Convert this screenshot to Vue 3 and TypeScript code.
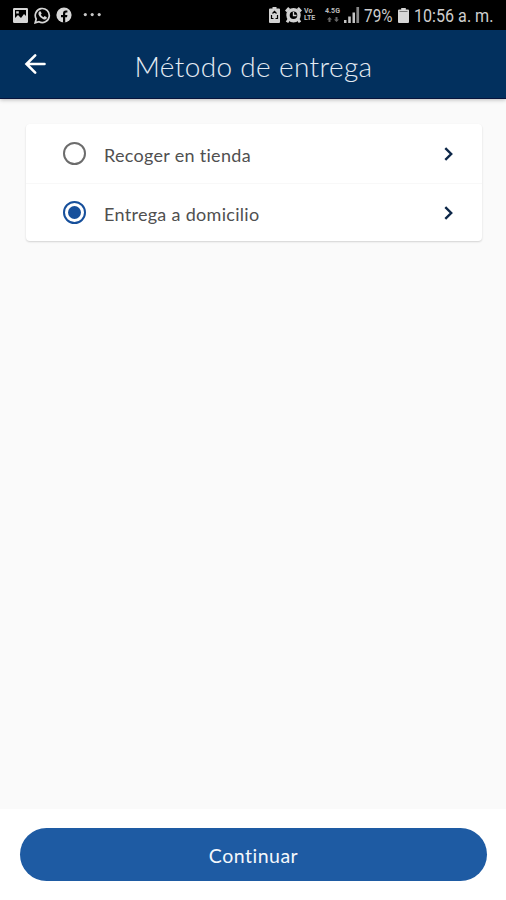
<script setup lang="ts">
import { ref } from 'vue'

interface DeliveryOption {
  id: string
  label: string
}

const options: DeliveryOption[] = [
  { id: 'pickup', label: 'Recoger en tienda' },
  { id: 'home', label: 'Entrega a domicilio' },
]
const selected = ref('home')
</script>

<template>
  <div class="screen">
    <div class="status">
      <svg class="picture" width="15" height="15" viewBox="0 0 15 15">
        <path fill="#d6d6d6" fill-rule="evenodd" d="M1.2 0h12.6q1.2 0 1.2 1.2v12.6q0 1.2-1.2 1.2H1.2Q0 15 0 13.8V1.2Q0 0 1.2 0ZM2 2v8l3-3 3 3 3-4 2 2V2ZM3.2 3.2h2.6v2.3H3.2Z" />
      </svg>
      <svg class="whatsapp" width="17" height="17" viewBox="0 0 17 17">
        <path fill="none" stroke="#d6d6d6" stroke-width="1.7" d="M1.2 15.8l1-3.8A7 7 0 1 1 5 14.7Z" />
        <path fill="#d6d6d6" d="M5.3 4.5l1.2-.2 1.2 2.3-.9 1.1q.9 1.8 2.7 2.5l1.1-1.1 2.2 1.1-.2 1.4q-1.2 1.4-3.3.6Q5.7 10.9 4.6 7.8 4 5.6 5.3 4.5Z" />
      </svg>
      <svg class="facebook" width="16" height="16" viewBox="0 0 16 16">
        <circle cx="8" cy="8" r="7.6" fill="#d6d6d6" />
        <path fill="#000" d="M7 15.8v-5.6H5V8h2V6.5Q7 3.6 9.8 3.6h1.6v2H10.2Q9.2 5.6 9.2 6.6V8h2.2l-.4 2.2H9.2v5.6Z" />
      </svg>
      <svg class="dots" width="18" height="4" viewBox="0 0 18 4">
        <g fill="#c8c8c8"><circle cx="2.3" cy="1.6" r="1.6" /><circle cx="9.200" cy="1.6" r="1.6" /><circle cx="16.2" cy="1.6" r="1.6" /></g>
      </svg>
      <svg class="saver" width="11" height="16" viewBox="0 0 11 16">
        <path fill="#d2d2d2" d="M3.5 0h4v1.6H10q1 0 1 1V15q0 1-1 1H1q-1 0-1-1V2.6q0-1 1-1h2.5Z" />
        <path fill="none" stroke="#000" stroke-width="1.2" d="M3.5 6.5l2-2.2 2 2.2M2.5 8v3.5h2M8.5 8v3.5h-2" />
      </svg>
      <svg class="alarm" width="17" height="16" viewBox="0 0 17 16">
        <circle cx="8.5" cy="8.3" r="5.5" fill="none" stroke="#d2d2d2" stroke-width="3.4" />
        <path fill="none" stroke="#d2d2d2" stroke-width="2.8" d="M1 4.5L4.2 1M16 4.5L12.8 1M3.8 12.5L2 15.3M13.2 12.5L15 15.3" />
        <path fill="none" stroke="#d2d2d2" stroke-width="1.3" d="M8.5 5v3.500h3" />
      </svg>
      <div class="volte"><span>Vo</span><span>LTE</span></div>
      <div class="network">
        <span>4.5G</span>
        <svg width="12" height="6" viewBox="0 0 12 6">
          <path fill="#666" d="M0 2.500L2.500 0 5 2.500H3.500V5h-2V2.500ZM7 2.500h1.500V0h2v2.500H12L9.500 5Z" />
        </svg>
      </div>
      <svg class="signal" width="16" height="16" viewBox="0 0 16 16">
        <path fill="#c4c4c4" d="M0 13h2.500v3H0ZM4.200 9.500h2.600V16H4.200ZM8.500 5.500H11V16H8.500Z" />
        <path fill="#888" d="M12.400 0h2.700v16h-2.700Z" />
      </svg>
      <svg class="percent" width="30" height="26" viewBox="0 0 30 26">
        <text x="0" y="19.500" textLength="28.500" lengthAdjust="spacingAndGlyphs" class="status-text">79%</text>
      </svg>
      <svg class="battery" width="11" height="15" viewBox="0 0 11 15">
        <path fill="#d6d6d6" d="M3.200 0h4.600v1.500H10q1 0 1 1V14q0 1-1 1H1q-1 0-1-1V2.500q0-1 1-1h2.200Z" />
        <path stroke="#777" stroke-width="1" d="M1.500 3.500h8" />
      </svg>
      <svg class="clock" width="82" height="26" viewBox="0 0 82 26">
        <text x="0" y="19.500" textLength="79.500" lengthAdjust="spacingAndGlyphs" class="status-text">10:56 a. m.</text>
      </svg>
    </div>

    <header class="appbar">
      <button class="back" aria-label="Atrás">
        <svg width="22" height="22" viewBox="0 0 22 22">
          <path fill="none" stroke="#fff" stroke-width="2.600" stroke-linecap="round" d="M20.500 11H2.800M11.200 2.300L2.500 11l8.700 8.700" />
        </svg>
      </button>
      <h1>Método de entrega</h1>
    </header>

    <main>
      <div class="card" role="radiogroup">
        <div
          v-for="option in options"
          :key="option.id"
          class="option"
          role="radio"
          :aria-checked="selected === option.id"
          @click="selected = option.id"
        >
          <span class="radio" :class="{ checked: selected === option.id }"></span>
          <span class="label">{{ option.label }}</span>
          <svg class="chevron" width="10" height="14" viewBox="0 0 10 14">
            <path fill="none" stroke="#0d2748" stroke-width="2.400" d="M1.300 1.200L7.200 7l-5.900 5.800" />
          </svg>
        </div>
      </div>
    </main>

    <footer>
      <button class="continue"><span>Continuar</span></button>
    </footer>
  </div>
</template>

<style>
body {
  margin: 0;
}
</style>

<style scoped>
.screen {
  width: 506px;
  height: 900px;
  display: flex;
  flex-direction: column;
  background: #fafafa;
  font-family: Lato, "Open Sans", sans-serif;
  overflow: hidden;
}
button {
  border: 0;
  padding: 0;
  background: none;
  font: inherit;
  color: inherit;
}
svg {
  display: block;
  flex: none;
}
.status {
  height: 30px;
  flex: none;
  box-sizing: border-box;
  padding-left: 13px;
  display: flex;
  align-items: center;
  background: #000;
}
.status-text {
  font-family: Roboto, sans-serif;
  font-size: 18px;
  fill: #cecece;
}
.whatsapp { margin-left: 6px; }
.facebook { margin-left: 5px; }
.dots { margin-left: 11px; }
.saver { margin-left: 168px; }
.alarm { margin-left: 5px; }
.volte,
.network {
  flex: none;
  display: flex;
  flex-direction: column;
  font: 700 7px/7px Roboto, sans-serif;
  color: #bdbdbd;
}
.volte {
  width: 14px;
  margin-left: 2px;
}
.network {
  width: 17px;
  margin-left: 6px;
  align-items: center;
  gap: 2px;
}
.signal { margin-left: 3px; }
.percent { margin-left: 4px; }
.battery { margin-left: 4px; }
.clock { margin-left: 5px; }
.appbar {
  height: 69px;
  flex: none;
  box-sizing: border-box;
  display: grid;
  grid-template-columns: 70px 1fr 70px;
  align-items: center;
  background: #02305e;
  border-bottom: 1px solid #07143c;
  box-shadow: 0 1px 4px rgba(0, 0, 0, 0.25);
}
.back {
  justify-self: center;
}
h1 {
  margin: 4px 0 0 1px;
  text-align: center;
  font-size: 28px;
  line-height: 34px;
  font-weight: 300;
  letter-spacing: 0.35px;
  white-space: nowrap;
  color: #e4ebf3;
}
main {
  flex: 1;
  padding: 25px 24px 0 26px;
}
.card {
  background: #fff;
  border-radius: 4px;
  box-shadow: 0 1px 2px rgba(0, 0, 0, 0.16);
}
.option {
  height: 59px;
  box-sizing: border-box;
  display: flex;
  align-items: center;
  padding: 0 28px 0 37px;
}
.option + .option {
  height: 58px;
  border-top: 1px solid #f8f8f8;
}
.radio {
  width: 23px;
  height: 23px;
  box-sizing: border-box;
  border: 2.5px solid #6c6c6c;
  border-radius: 50%;
  display: flex;
  align-items: center;
  justify-content: center;
}
.radio.checked {
  border-color: #164f9b;
}
.radio.checked::after {
  content: "";
  width: 13px;
  height: 13px;
  border-radius: 50%;
  background: #164f9b;
}
.label {
  flex: 1;
  margin: 2px 0 0 18px;
  font-size: 18px;
  line-height: 24px;
  letter-spacing: 0.3px;
  color: #505050;
  white-space: nowrap;
}
footer {
  height: 91px;
  flex: none;
  box-sizing: border-box;
  padding: 19px 19px 0 20px;
  background: #fff;
}
.continue {
  width: 100%;
  height: 53px;
  border-radius: 27px;
  background: #1e5ba3;
  color: #f4f8fc;
  font-size: 19.5px;
  letter-spacing: 0.5px;
}
.continue span {
  display: block;
  padding-top: 2px;
}
</style>
